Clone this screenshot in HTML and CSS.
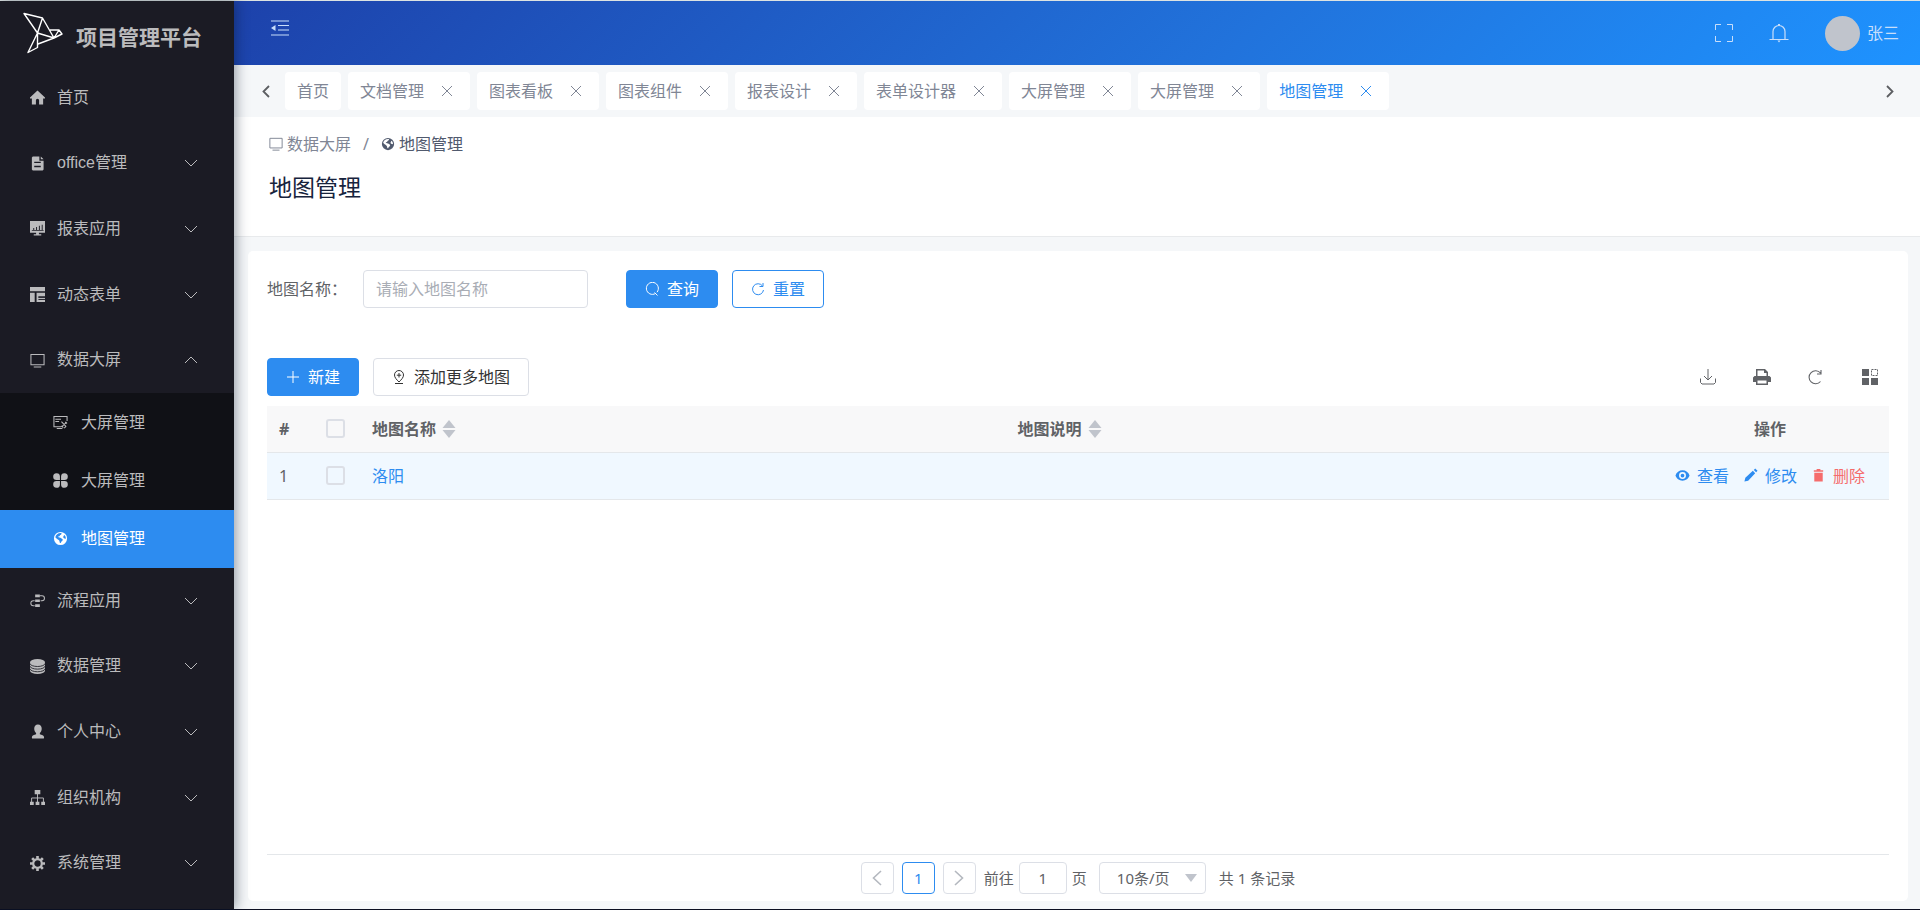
FILE: index.html
```html
<!DOCTYPE html>
<html lang="zh-CN">
<head>
<meta charset="utf-8">
<title>地图管理</title>
<link rel="stylesheet" href="styles.css">
</head>
<body>
<svg class="sprite" aria-hidden="true">
  <symbol id="down" viewBox="0 0 14 14"><path d="M1 4l6 6 6-6" fill="none" stroke="currentColor"/></symbol>
  <symbol id="up" viewBox="0 0 14 14"><path d="M1 10l6-6 6 6" fill="none" stroke="currentColor"/></symbol>
  <symbol id="close" viewBox="0 0 12 12"><path d="M1 1l10 10M11 1L1 11" fill="none" stroke="currentColor"/></symbol>
  <symbol id="screen" viewBox="0 0 16 16"><path d="M1 1.5h14v11H1zM4 15h8" fill="none" stroke="currentColor" stroke-width="1.1"/></symbol>
  <symbol id="globe" viewBox="0 0 16 16"><path fill-rule="evenodd" fill="currentColor" d="M8 1a7 7 0 1 0 0 14A7 7 0 0 0 8 1zM9 2.3c.5.8-.3 1.6-1.200 2-.6.3-.4 1-1 1.300-.8.3-1.400.2-1.300.9.3.7 2.500.3 3.300 1.200.8.8 1.900.8 1.600 2-.4 1.300-1.700 1.300-1.900 2.600-.2.8-1.100.8-1.300 0-.3-1.300-.2-1.900-1.100-2.700C5 8.600 3.200 7.900 2.500 6.600 3 4 5.700 1.900 9 2.300zM12.200 4.200c1 1 1.500 2.300 1.500 3.800-.9.5-2.400-.1-2.700-1.100-.2-1 .4-1.800 1.200-2.700z"/></symbol>
  <symbol id="sort" viewBox="0 0 14 20"><path d="M7 1l6.500 8H.5zM7 19L.5 11h13z" fill="currentColor"/></symbol>
</svg>
<div class="app">
  <aside class="sidebar">
    <div class="brand">
      <svg class="logo" viewBox="0 0 40 42" aria-hidden="true"><path fill="none" stroke="#fff" stroke-width="1.400" stroke-linejoin="round" d="M1 1.500L19.500 6 31 26 14.500 21zM19.500 6l-5 15L5 40.500l9.500-5V21M15 32l16-6 8-4-3-4h-9M36 18l-5 8"/></svg>
      <span class="brand-name">项目管理平台</span>
    </div>
    <nav class="menu">
      <a class="item" href="#"><svg class="ico" viewBox="0 0 16 16"><path fill="currentColor" d="M8 .5L16 8v1h-2v6.500h-4.300V11a1.700 1.700 0 0 0-3.400 0v4.500H2V9H0V8z"/></svg><span>首页</span></a>
      <button class="item" type="button"><svg class="ico" viewBox="0 0 16 16"><path fill="currentColor" fill-rule="evenodd" d="M3 .5h7v4.500h4.500v9.500l-1 1H3l-1-1v-13zM11.500.5l3 3h-3zM4.500 6v1.500h7V6zM4.500 10.500V12h7v-1.500z"/></svg><span>office管理</span><svg class="arrow"><use href="#down"/></svg></button>
      <button class="item" type="button"><svg class="ico" viewBox="0 0 16 16"><path fill="currentColor" fill-rule="evenodd" d="M0 0h16v12.500H9.500V14H12v1.500H4V14h2.500v-1.500H0zM1.500 10.500h13v-1h-1V4h-1v5.500h-2V5h-1v4.500h-2v-3h-1v3h-2v-2h-1v2h-1z"/></svg><span>报表应用</span><svg class="arrow"><use href="#down"/></svg></button>
      <button class="item" type="button"><svg class="ico" viewBox="0 0 16 16"><path fill="currentColor" d="M0 0h16v4.500H0zM0 6h5v10H0zM7 6h9v4H9v1.500h7V16H7z"/><path d="M9 10.700h7M9 13.300h7" stroke="#1b1b24" fill="none"/></svg><span>动态表单</span><svg class="arrow"><use href="#down"/></svg></button>
      <button class="item" type="button" aria-expanded="true"><svg class="ico"><use href="#screen"/></svg><span>数据大屏</span><svg class="arrow"><use href="#up"/></svg></button>
      <div class="submenu">
        <a class="subitem" href="#"><svg class="ico" viewBox="0 0 16 16"><path fill="none" stroke="currentColor" stroke-width="1.100" d="M9 12.500H1v-11h14v5M2.500 4.500h6M2.500 7h4M4 14.500h6M9 7l5 5.500M14.500 7.500l-5 5M13 7.500l2 1.500M9 11.500l2 2M12 14l2-2"/></svg><span>大屏管理</span></a>
        <a class="subitem" href="#"><svg class="ico" viewBox="0 0 16 16"><path fill="currentColor" d="M7.400 7.400H4A3.600 3.600 0 1 1 7.400 3.800zM8.600 7.400V3.800A3.600 3.600 0 1 1 12 7.400zM7.400 8.600v3.600A3.600 3.600 0 1 1 4 8.600zM8.600 8.600H12a3.600 3.600 0 1 1-3.400 3.600z"/></svg><span>大屏管理</span></a>
        <a class="subitem active" href="#" aria-current="page"><svg class="ico"><use href="#globe"/></svg><span>地图管理</span></a>
      </div>
      <button class="item" type="button"><svg class="ico" viewBox="0 0 16 16"><path fill="currentColor" d="M5.500 1.500h5v3h-5zM5.500 7h5v2.600h-5zM5.500 12h5v3h-5z"/><path fill="none" stroke="currentColor" stroke-width="1.100" d="M10.500 3h2.300a2.600 2.600 0 0 1 0 5.300h-1.500M5 8.300H3.500a2.600 2.600 0 0 0 0 5.200H5"/></svg><span>流程应用</span><svg class="arrow"><use href="#down"/></svg></button>
      <button class="item" type="button"><svg class="ico" viewBox="0 0 16 16"><path fill="currentColor" d="M0 3.500a8 3.400 0 0 1 16 0v9a8 3.400 0 0 1-16 0z"/><path fill="none" stroke="#1b1b24" stroke-width=".9" d="M0 4.800a8 3.200 0 0 0 16 0M0 7.600a8 3.200 0 0 0 16 0M0 10.400a8 3.200 0 0 0 16 0"/></svg><span>数据管理</span><svg class="arrow"><use href="#down"/></svg></button>
      <button class="item" type="button"><svg class="ico" viewBox="0 0 16 16"><path fill="currentColor" d="M8.500.5c2.600 0 4 1.800 4 4.500 0 2-.9 3.500-2 4.500v1.300c2 .7 4.500 1 4.500 3.200 0 .8-.2 1.500-.6 1.500H2.600C2.200 15.500 2 14.800 2 14c0-2.200 2.500-2.500 4.500-3.200V9.500c-1.100-1-2-2.500-2-4.500 0-2.700 1.400-4.500 4-4.500z"/></svg><span>个人中心</span><svg class="arrow"><use href="#down"/></svg></button>
      <button class="item" type="button"><svg class="ico" viewBox="0 0 16 16"><path fill="currentColor" d="M5 0h6v4.500H5zM0 12.500h4V16H0zM6 12.500h4V16H6zM12 12.500h4V16h-4z"/><path fill="none" stroke="currentColor" d="M8 4v9M1.700 13V8.500h12.600V13"/></svg><span>组织机构</span><svg class="arrow"><use href="#down"/></svg></button>
      <button class="item" type="button"><svg class="ico" viewBox="0 0 16 16"><circle cx="8" cy="8" r="4.600" fill="none" stroke="currentColor" stroke-width="2.400"/><path fill="none" stroke="currentColor" stroke-width="2.800" d="M8 0v3M8 13v3M0 8h3M13 8h3M2.300 2.300l2.200 2.200M11.500 11.500l2.200 2.200M2.300 13.700l2.200-2.200M11.500 4.500l2.200-2.200"/></svg><span>系统管理</span><svg class="arrow"><use href="#down"/></svg></button>
    </nav>
  </aside>

  <div class="main">
    <header class="topbar">
      <button class="icon-btn fold" type="button" aria-label="收起菜单"><svg width="18" height="16" viewBox="0 0 18 16"><path d="M0 1h18M7 5.500h11M7 10h11M0 15h18" fill="none" stroke="currentColor" stroke-width="1.200"/><path d="M4.500 5v6L0 8z" fill="currentColor"/></svg></button>
      <div class="top-tools">
        <button class="icon-btn" type="button" aria-label="全屏"><svg width="18" height="18" viewBox="0 0 18 18"><path d="M.5 6V.5H6M12 .5h5.500V6M17.500 12v5.500H12M6 17.500H.5V12" fill="none" stroke="currentColor"/></svg></button>
        <button class="icon-btn" type="button" aria-label="通知"><svg width="20" height="20" viewBox="0 0 20 20"><path d="M4 16V8.500a6 6 0 0 1 12 0V16M.5 16.500h19" fill="none" stroke="currentColor" stroke-width="1.200"/><path d="M9 1h2v2H9zM8.500 17.500h3L10 19.500z" fill="currentColor"/></svg></button>
        <a class="user" href="#"><span class="avatar"></span><span>张三</span></a>
      </div>
    </header>

    <div class="tabs">
      <button class="icon-btn tab-nav" type="button" aria-label="向左"><svg width="8" height="13" viewBox="0 0 8 13"><path d="M7 1L1.500 6.500 7 12" fill="none" stroke="currentColor" stroke-width="1.800"/></svg></button>
      <div class="tab-list">
        <div class="tab home"><a href="#">首页</a></div>
        <div class="tab"><a href="#">文档管理</a><button type="button" aria-label="关闭"><svg><use href="#close"/></svg></button></div>
        <div class="tab"><a href="#">图表看板</a><button type="button" aria-label="关闭"><svg><use href="#close"/></svg></button></div>
        <div class="tab"><a href="#">图表组件</a><button type="button" aria-label="关闭"><svg><use href="#close"/></svg></button></div>
        <div class="tab"><a href="#">报表设计</a><button type="button" aria-label="关闭"><svg><use href="#close"/></svg></button></div>
        <div class="tab"><a href="#">表单设计器</a><button type="button" aria-label="关闭"><svg><use href="#close"/></svg></button></div>
        <div class="tab"><a href="#">大屏管理</a><button type="button" aria-label="关闭"><svg><use href="#close"/></svg></button></div>
        <div class="tab"><a href="#">大屏管理</a><button type="button" aria-label="关闭"><svg><use href="#close"/></svg></button></div>
        <div class="tab current"><a href="#">地图管理</a><button type="button" aria-label="关闭"><svg><use href="#close"/></svg></button></div>
      </div>
      <button class="icon-btn tab-nav" type="button" aria-label="向右"><svg width="8" height="13" viewBox="0 0 8 13"><path d="M1 1l5.500 5.500L1 12" fill="none" stroke="currentColor" stroke-width="1.800"/></svg></button>
    </div>

    <section class="page-head">
      <nav class="crumbs"><a href="#"><svg><use href="#screen"/></svg>数据大屏</a><span class="slash">/</span><span class="here"><svg><use href="#globe"/></svg>地图管理</span></nav>
      <h1>地图管理</h1>
    </section>

    <main class="card">
      <form class="search">
        <label for="map-name">地图名称：</label>
        <input id="map-name" type="text" placeholder="请输入地图名称">
        <button class="btn primary" type="button"><svg width="14" height="14" viewBox="0 0 14 14"><path d="M10.500 11.500A6 6 0 1 1 12 10.200M9.500 10.500l3 3" fill="none" stroke="currentColor"/></svg>查询</button>
        <button class="btn outline" type="button"><svg width="14" height="14" viewBox="0 0 14 14"><path d="M11.500 4A5.500 5.500 0 1 0 12.500 8M12 1v3.500H8.500" fill="none" stroke="currentColor"/></svg>重置</button>
      </form>

      <div class="toolbar">
        <button class="btn primary" type="button"><svg width="14" height="14" viewBox="0 0 14 14"><path d="M7 1v12M1 7h12" fill="none" stroke="currentColor"/></svg>新建</button>
        <button class="btn plain" type="button"><svg width="14" height="14" viewBox="0 0 14 14"><path d="M7 12C4.500 9.500 2.500 7.500 2.500 5a4.500 4.500 0 0 1 9 0c0 2.500-2 4.500-4.500 7zM7 3v4.500M4.800 5.200h4.400M3 13.500h8" fill="none" stroke="currentColor"/></svg>添加更多地图</button>
        <div class="table-tools">
          <button class="icon-btn" type="button" aria-label="导出"><svg width="18" height="18" viewBox="0 0 18 18"><path d="M9 1v11M5 8l4 4 4-4M1.500 10.500v4l1.500 1.500h12l1.500-1.500v-4" fill="none" stroke="currentColor"/></svg></button>
          <button class="icon-btn" type="button" aria-label="打印"><svg width="18" height="18" viewBox="0 0 18 18"><path fill="currentColor" fill-rule="evenodd" d="M3 1h9l3 3v4h1.500L18 9.500V14h-3v3H3v-3H0V9.500L1.500 8H3zM4.500 2.500V8h9V5H11V2.500zM4.500 12.500v3h9v-3z"/></svg></button>
          <button class="icon-btn" type="button" aria-label="刷新"><svg width="18" height="18" viewBox="0 0 18 18"><path d="M13.500 5A6.500 6.500 0 1 0 13.500 13.500M14 2v4h-4" fill="none" stroke="currentColor" stroke-width="1.100"/></svg></button>
          <button class="icon-btn" type="button" aria-label="列设置"><svg width="18" height="18" viewBox="0 0 18 18"><path fill="currentColor" d="M1 1h7v7H1zM1 10h7v7H1zM10 10h7v7h-7z"/><path d="M10.500 1.500h6v6h-6z" fill="none" stroke="currentColor" stroke-dasharray="2 1"/></svg></button>
        </div>
      </div>

      <div class="table-wrap">
        <table>
          <colgroup><col class="c-num"><col class="c-check"><col><col><col class="c-ops"></colgroup>
          <thead><tr><th>#</th><th class="mid"><input type="checkbox" aria-label="全选"></th><th><span class="sortable">地图名称<svg><use href="#sort"/></svg></span></th><th><span class="sortable">地图说明<svg><use href="#sort"/></svg></span></th><th class="mid">操作</th></tr></thead>
          <tbody><tr><td>1</td><td class="mid"><input type="checkbox" aria-label="选择洛阳"></td><td><a class="link" href="#">洛阳</a></td><td></td>
            <td><div class="ops">
              <button class="op" type="button"><svg viewBox="0 0 16 16"><path fill="currentColor" fill-rule="evenodd" d="M8 2.500c3.500 0 6.500 2.200 7.500 5.500-1 3.300-4 5.500-7.500 5.500S1.500 11.300.5 8C1.500 4.700 4.500 2.500 8 2.500zM8 4.300a3.700 3.700 0 1 0 0 7.400 3.700 3.700 0 0 0 0-7.400zM8 6a2 2 0 1 1 0 4 2 2 0 0 1 0-4z"/></svg>查看</button>
              <button class="op" type="button"><svg viewBox="0 0 16 16"><path fill="currentColor" d="M1.500 14.500l1-4L10.500 3 13 5.500 5.500 13.500zM11.500 2l1.500-1.500L15.500 3 14 4.500z"/></svg>修改</button>
              <button class="op danger" type="button"><svg viewBox="0 0 16 16"><path fill="currentColor" d="M3 2.500h3V1h4v1.500h3V4H3zM3.500 5h9v9.500h-9z"/></svg>删除</button>
            </div></td></tr></tbody>
        </table>
      </div>

      <footer class="pager">
        <button class="page-btn" type="button" aria-label="上一页"><svg width="10" height="16" viewBox="0 0 10 16"><path d="M9 1L1.500 8 9 15" fill="none" stroke="currentColor" stroke-width="1.600"/></svg></button>
        <button class="page-btn on" type="button">1</button>
        <button class="page-btn" type="button" aria-label="下一页"><svg width="10" height="16" viewBox="0 0 10 16"><path d="M1 1l7.500 7L1 15" fill="none" stroke="currentColor" stroke-width="1.600"/></svg></button>
        <label class="jump">前往<input type="text" value="1">页</label>
        <div class="size"><select aria-label="每页条数"><option>10条/页</option></select><svg viewBox="0 0 12 8" aria-hidden="true"><path d="M0 0h12L6 8z" fill="currentColor"/></svg></div>
        <span>共 1 条记录</span>
      </footer>
    </main>
  </div>
</div>
</body>
</html>
```

FILE: styles.css
```css
* { box-sizing: border-box; }
body {
  margin: 0;
  color: #606266;
  font: 16px/24px "Noto Sans", "Noto Sans CJK SC", sans-serif;
}
button, input, select { font: inherit; color: inherit; margin: 0; }
button { padding: 0; border: 0; background: none; cursor: pointer; }
a { color: inherit; text-decoration: none; }
svg { flex: none; display: block; }
.sprite { position: absolute; width: 0; height: 0; }

.app {
  display: flex;
  min-height: 100vh;
  border-top: 1px solid #dde3e2;
  border-bottom: 1px solid #0c0f22;
  background: #f5f7f9;
}

/* Sidebar */
.sidebar {
  position: relative;
  z-index: 1;
  display: flex;
  flex-direction: column;
  flex: none;
  width: 234px;
  background: #1b1b24;
  color: #bbbbbd;
  font-family: "Liberation Sans", "Noto Sans CJK SC", sans-serif;
  box-shadow: 2px 0 12px rgba(0, 21, 41, .4);
}
.brand { display: flex; align-items: center; gap: 13px; height: 64px; padding-left: 23px; }
.logo { width: 40px; height: 42px; }
.brand-name { padding-top: 9px; font-size: 21px; font-weight: 700; }
.menu { display: flex; flex-direction: column; flex: 1; padding-bottom: 13px; }
.item {
  display: flex;
  flex: 1 0 56px;
  align-items: center;
  gap: 12px;
  padding: 0 36px 0 30px;
  text-align: left;
}
.ico { width: 15px; height: 15px; }
.arrow { width: 14px; height: 14px; margin-left: auto; }
.submenu { flex: none; padding-top: 1px; background: #101116; }
.subitem { display: flex; align-items: center; gap: 13px; height: 58px; padding-left: 53px; }
.subitem.active { background: #2d8cf0; color: #fff; }

/* Header */
.main { display: flex; flex-direction: column; flex: 1; min-width: 0; }
.icon-btn { display: flex; align-items: center; justify-content: center; }
.topbar {
  display: flex;
  align-items: center;
  justify-content: space-between;
  height: 64px;
  padding: 0 21px 0 37px;
  background: linear-gradient(135deg, #1d42ab, #2173dc 60%, #1e93ff);
  color: #c8defa;
}
.fold { padding-bottom: 11px; }
.top-tools { display: flex; align-items: center; gap: 36px; }
.user { display: flex; align-items: center; gap: 7px; }
.avatar { width: 35px; height: 35px; border-radius: 50%; background: #c0c4cc; }

/* Open page tabs */
.tabs { display: flex; align-items: center; height: 52px; padding: 0 26px 0 28px; }
.tab-nav { width: 8px; color: #5c5e62; }
.tab-list { display: flex; flex: 1; gap: 7px; margin-left: 15px; overflow: hidden; color: #808695; }
.tab {
  display: flex;
  align-items: center;
  gap: 17px;
  height: 38px;
  padding: 0 17px 0 12px;
  border-radius: 4px;
  background: #fff;
  white-space: nowrap;
}
.tab.home { padding: 0 12px; }
.tab.current { color: #2d8cf0; }
.tab svg { width: 12px; height: 12px; }

/* Page title */
.page-head { height: 120px; padding: 15px 35px; border-bottom: 1px solid #e8eaec; background: #fff; }
.crumbs { display: flex; gap: 12px; color: #808695; }
.crumbs a, .here { display: flex; align-items: center; gap: 4px; }
.crumbs svg { width: 14px; height: 14px; }
.here { color: #515a6e; }
h1 { margin: 14px 0 0; color: #17233d; font-size: 23px; line-height: 34px; font-weight: 400; }

/* Content card */
.card {
  display: flex;
  flex-direction: column;
  flex: 1;
  margin: 14px 12px 8px 14px;
  padding: 19px 19px 7px;
  border-radius: 5px;
  background: #fff;
}
.search { display: flex; align-items: center; }
.search label { width: 96px; }
.search input {
  width: 225px;
  height: 38px;
  margin-right: 38px;
  padding: 0 12px;
  border: 1px solid #dcdfe6;
  border-radius: 4px;
}
.search input::placeholder { color: #a9adb5; }
.btn {
  display: flex;
  align-items: center;
  gap: 8px;
  height: 38px;
  padding: 0 18px;
  border: 1px solid #2d8cf0;
  border-radius: 4px;
}
.btn + .btn { margin-left: 14px; }
.primary { background: #2d8cf0; color: #fff; }
.outline { color: #2d8cf0; }
.plain { border-color: #dcdfe6; color: #333; }
.toolbar { display: flex; align-items: center; margin-top: 50px; }
.table-tools { display: flex; gap: 36px; margin-left: auto; padding-right: 10px; }

table { width: 100%; border-collapse: collapse; table-layout: fixed; }
.table-wrap { flex: 1; margin-top: 10px; }
.c-num { width: 43px; }
.c-check { width: 50px; }
.c-ops { width: 238px; }
th, td { height: 47px; padding: 0 12px; border-bottom: 1px solid #e4e7ea; text-align: left; }
th { height: 46px; background: #f8f8f9; font-weight: 700; }
tbody tr { background: #f0f8ff; }
.mid { text-align: center; }
.mid input {
  appearance: none;
  display: block;
  width: 19px;
  height: 19px;
  margin: 0 auto;
  border: 2px solid #dcdfe6;
  border-radius: 3px;
}
.sortable { display: flex; align-items: center; gap: 6px; }
.sortable svg { width: 14px; height: 20px; color: #c0c4cc; }
.link, .op { color: #2d8cf0; }
.ops { display: flex; justify-content: center; gap: 14px; }
.op { display: flex; align-items: center; gap: 7px; }
.op svg { width: 15px; height: 15px; }
.danger { color: #f56c6c; }

/* Pagination */
.pager {
  display: flex;
  align-items: center;
  justify-content: center;
  padding-top: 7px;
  border-top: 1px solid #e4e7ea;
  font-size: 15px;
}
.page-btn {
  display: flex;
  align-items: center;
  justify-content: center;
  width: 33px;
  height: 32px;
  margin-right: 8px;
  border: 1px solid #dcdfe6;
  border-radius: 4px;
  color: #b4b8bf;
}
.page-btn.on { border-color: #2d8cf0; color: #2d8cf0; }
.jump { display: flex; align-items: center; gap: 5px; }
.jump input { width: 48px; height: 32px; border: 1px solid #dcdfe6; border-radius: 4px; text-align: center; }
.size { position: relative; margin: 0 13px 0 12px; }
.size select {
  appearance: none;
  width: 107px;
  height: 32px;
  padding: 0 17px;
  border: 1px solid #dcdfe6;
  border-radius: 4px;
  background: #fff;
}
.size svg { position: absolute; top: 12px; right: 9px; width: 12px; height: 8px; color: #c0c4cc; pointer-events: none; }
```
